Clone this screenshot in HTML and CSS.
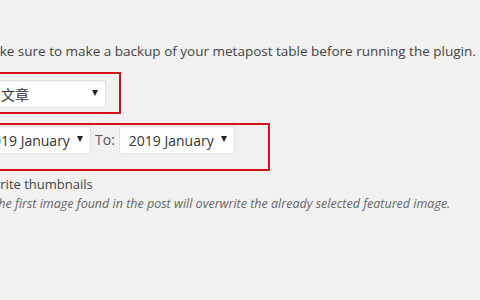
FILE: index.html
```html
<!DOCTYPE html>
<html>
<head>
<meta charset="utf-8">
<link rel="stylesheet" href="styles.css">
</head>
<body>
<div class="page">
  <p class="note">Make sure to make a backup of your metapost table before running the plugin.</p>
  <div class="mark mark-type">
    <div class="select select-type"><span class="val">文章</span><span class="arrow"></span></div>
  </div>
  <div class="mark mark-range">
    <div class="select select-date"><span class="val">2019 January</span><span class="arrow"></span></div>
    <span class="to">To:</span>
    <div class="select select-date"><span class="val">2019 January</span><span class="arrow"></span></div>
  </div>
  <label class="check">Overwrite thumbnails</label>
  <p class="desc">The first image found in the post will overwrite the already selected featured image.</p>
</div>
</body>
</html>
```
FILE: styles.css
```css
html, body {
  margin: 0;
  height: 100%;
  overflow: hidden;
  background: #f1f1f1;
}
body {
  font-family: "Open Sans", "Noto Sans CJK SC", sans-serif;
  color: #444;
  font-size: 13px;
}
.page {
  padding-top: 41px;
}
.note {
  margin: 0 0 0 -20px;
  line-height: 21px;
  font-size: 13.5px;
  white-space: nowrap;
  color: #444;
}
.mark {
  display: flex;
  align-items: flex-start;
  width: fit-content;
  border: 2px solid #d4141c;
  border-left: none;
}
.mark-type {
  margin: 10px 0 0 -40px;
  padding: 6px 13px 4px 31px;
}
.mark-range {
  margin: 9px 0 0 -40px;
  padding: 1px 33px 15px 15px;
}
.select {
  display: flex;
  align-items: center;
  justify-content: space-between;
  box-sizing: border-box;
  height: 28px;
  padding: 0 7px 0 9px;
  background: #fff;
  border: 1px solid #e2e2e2;
  box-shadow: inset 0 1px 2px rgba(0,0,0,.05);
  font-size: 14px;
  color: #333;
}
.select-type {
  width: 115px;
}
.select-date {
  width: 116px;
}
.arrow {
  width: 0;
  height: 0;
  border-left: 3px solid transparent;
  border-right: 3px solid transparent;
  border-top: 6px solid #222;
  margin-top: -2px;
}
.to {
  margin: 0 4px 0 4px;
  line-height: 28px;
  font-size: 14px;
  color: #555;
}
.check {
  display: block;
  margin: 3px 0 0 -39px;
  line-height: 20px;
  font-size: 13px;
  color: #444;
}
.desc {
  margin: 2px 0 0 -8px;
  line-height: 15px;
  font-size: 12.5px;
  font-style: italic;
  color: #666;
  white-space: nowrap;
}
```
